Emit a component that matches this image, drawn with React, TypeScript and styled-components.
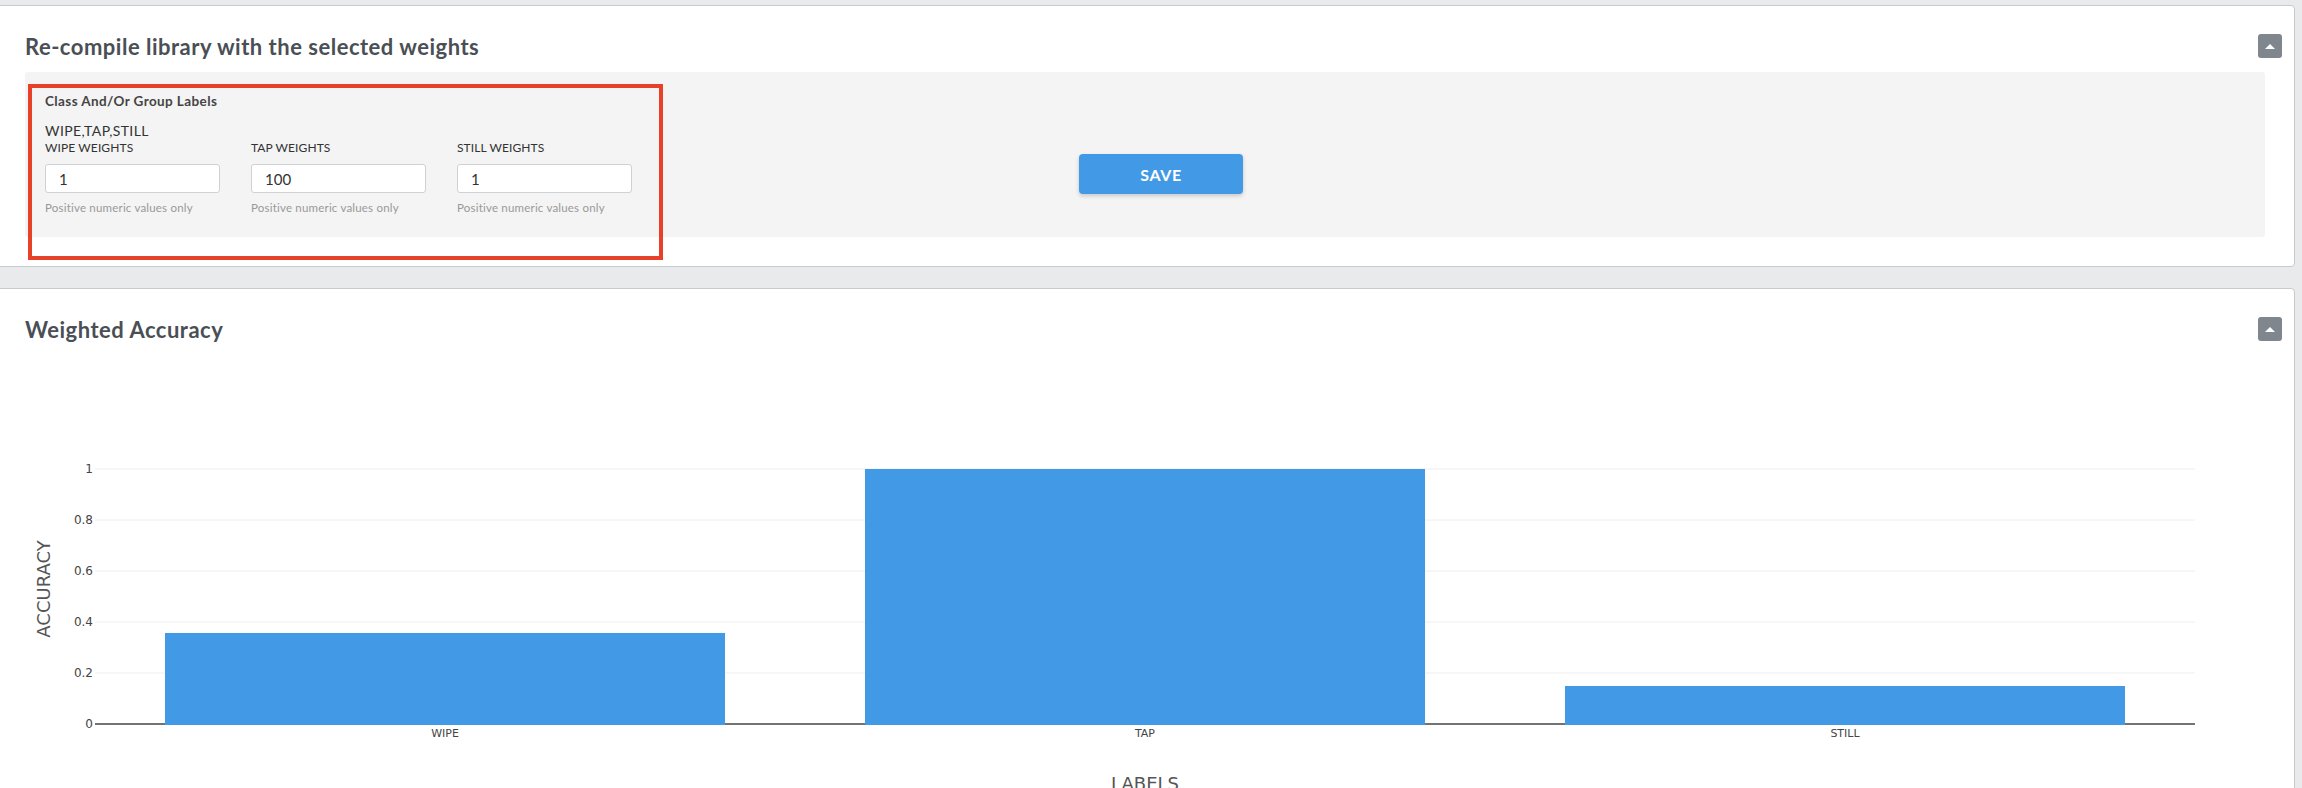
import * as React from 'react';
import styled, { createGlobalStyle } from 'styled-components';

const GlobalStyle = createGlobalStyle`
    html, body {
        margin: 0;
        padding: 0;
        background: #e9eaec;
        font-family: Lato, "Open Sans", sans-serif;
        overflow: hidden;
    }
`;

const colors = {
    text: '#4a4f55',
    border: '#c9cacd',
    panel: '#f4f4f4',
    blue: '#4299e6',
    toggle: '#80868e',
    grid: '#eeeeee',
    axis: '#444444',
};

const labels = ['WIPE', 'TAP', 'STILL'];
const weights = ['1', '100', '1'];
const accuracy = [0.357, 1, 0.149];

const Page = styled.div`
    padding-top: 5px;
    display: flex;
    flex-direction: column;
    gap: 21px;
    width: 2302px;
    height: 788px;
    overflow: hidden;
`;

const Card = styled.section`
    position: relative;
    margin-left: -5px;
    width: 2300px;
    box-sizing: border-box;
    background: #fff;
    border: 1px solid ${colors.border};
    border-radius: 4px;
    padding: 0 29px 29px;
`;

const CardHeader = styled.header`
    display: flex;
    align-items: center;
    justify-content: space-between;
    height: 24px;
    padding-top: 28px;
`;

const CardTitle = styled.h2`
    margin: 0;
    font-size: 22px;
    font-weight: 700;
    color: ${colors.text};
    letter-spacing: 0.5px;
`;

const Toggle = styled.button`
    width: 24px;
    height: 24px;
    margin-right: -17px;
    border: 0;
    border-radius: 3px;
    background: ${colors.toggle};
    display: flex;
    align-items: center;
    justify-content: center;
    padding: 0;

    &::after {
        content: '';
        border-left: 5px solid transparent;
        border-right: 5px solid transparent;
        border-bottom: 5px solid #fff;
    }
`;

const Panel = styled.div`
    margin-top: 14px;
    background: ${colors.panel};
    border-radius: 3px;
    padding: 20px 20px 22px;
    display: flex;
    align-items: flex-start;
`;

const Form = styled.div`
    width: 620px;
    flex: 0 0 auto;
`;

const GroupTitle = styled.div`
    font-size: 13.5px;
    line-height: 18px;
    font-weight: 700;
    color: #444;
    letter-spacing: 0.4px;
`;

const LabelList = styled.div`
    margin-top: 12px;
    font-size: 14px;
    line-height: 18px;
    color: #333;
    letter-spacing: 0.4px;
`;

const Fields = styled.div`
    display: grid;
    grid-template-columns: repeat(3, 175px);
    column-gap: 31px;
`;

const Field = styled.label`
    display: flex;
    flex-direction: column;
`;

const FieldLabel = styled.span`
    font-size: 12px;
    line-height: 16px;
    color: #333;
    text-transform: uppercase;
    letter-spacing: 0.1px;
`;

const Input = styled.input`
    margin-top: 8px;
    height: 29px;
    box-sizing: border-box;
    border: 1px solid #cfd1d4;
    border-radius: 3px;
    background: #fff;
    padding: 0 13px;
    font-family: Lato, sans-serif;
    font-size: 15px;
    color: #333;
    outline: none;
`;

const Hint = styled.span`
    margin-top: 8px;
    font-size: 11.5px;
    line-height: 14px;
    color: #999;
    letter-spacing: 0.2px;
`;

const SaveButton = styled.button`
    margin: 62px 0 0 414px;
    width: 164px;
    height: 40px;
    border: 0;
    border-radius: 4px;
    background: ${colors.blue};
    box-shadow: 0 2px 4px rgba(0, 0, 0, 0.18);
    color: #fff;
    font-family: Lato, sans-serif;
    font-size: 16px;
    font-weight: 700;
    letter-spacing: 0.6px;
`;

const Highlight = styled.div`
    position: absolute;
    left: 32px;
    top: 78px;
    width: 635px;
    height: 176px;
    box-sizing: border-box;
    border: 4px solid #e8412a;
    pointer-events: none;
`;

const Chart = styled.svg`
    display: block;
    margin: 0 -29px;
    width: 2298px;
    height: 460px;
    font-family: "DejaVu Sans", Verdana, sans-serif;
`;

// plot geometry in page coordinates
const plot = { left: 95, right: 2195, zero: 724, one: 469 };

const AccuracyChart: React.FC = () => {
    const span = plot.zero - plot.one;
    const band = (plot.right - plot.left) / labels.length;
    const ticks = [0, 0.2, 0.4, 0.6, 0.8, 1];

    return (
        <Chart viewBox="0 0 2298 460">
            <g transform="translate(4,-341)">
                {ticks.slice(1).map(t => {
                    const y = plot.zero - t * span;
                    return <line key={t} x1={plot.left} x2={plot.right} y1={y} y2={y} stroke={colors.grid} strokeWidth={1} />;
                })}
                <line x1={plot.left} x2={plot.right} y1={plot.zero} y2={plot.zero} stroke={colors.axis} strokeWidth={1.5} />
                {ticks.map(t => (
                    <text key={t} x={93} y={plot.zero - t * span + 4} fontSize={12} fill="#444" textAnchor="end">
                        {t}
                    </text>
                ))}
                {accuracy.map((v, i) => {
                    const x = plot.left + band * i + band * 0.1;
                    const top = plot.zero - v * span;
                    return (
                        <g key={labels[i]}>
                            <rect x={x} y={top} width={band * 0.8} height={plot.zero + 1 - top} fill={colors.blue} />
                            <text x={plot.left + band * (i + 0.5)} y={737} fontSize={11} fill="#444" textAnchor="middle">
                                {labels[i]}
                            </text>
                        </g>
                    );
                })}
                <text
                    x={43}
                    y={589}
                    fontSize={18}
                    fill="#555"
                    textAnchor="middle"
                    dominantBaseline="central"
                    transform="rotate(-90 43 589)"
                >
                    ACCURACY
                </text>
                <text x={(plot.left + plot.right) / 2} y={790} fontSize={18} fill="#555" textAnchor="middle">
                    LABELS
                </text>
            </g>
        </Chart>
    );
};

export default function App() {
    return (
        <>
            <GlobalStyle />
            <Page>
                <Card>
                    <CardHeader>
                        <CardTitle>Re-compile library with the selected weights</CardTitle>
                        <Toggle aria-label="collapse" />
                    </CardHeader>
                    <Panel>
                        <Form>
                            <GroupTitle>Class And/Or Group Labels</GroupTitle>
                            <LabelList>{labels.join(',')}</LabelList>
                            <Fields>
                                {labels.map((l, i) => (
                                    <Field key={l}>
                                        <FieldLabel>{l} weights</FieldLabel>
                                        <Input defaultValue={weights[i]} />
                                        <Hint>Positive numeric values only</Hint>
                                    </Field>
                                ))}
                            </Fields>
                        </Form>
                        <SaveButton>SAVE</SaveButton>
                    </Panel>
                    <Highlight />
                </Card>
                <Card>
                    <CardHeader>
                        <CardTitle>Weighted Accuracy</CardTitle>
                        <Toggle aria-label="collapse" />
                    </CardHeader>
                    <AccuracyChart />
                </Card>
            </Page>
        </>
    );
}
